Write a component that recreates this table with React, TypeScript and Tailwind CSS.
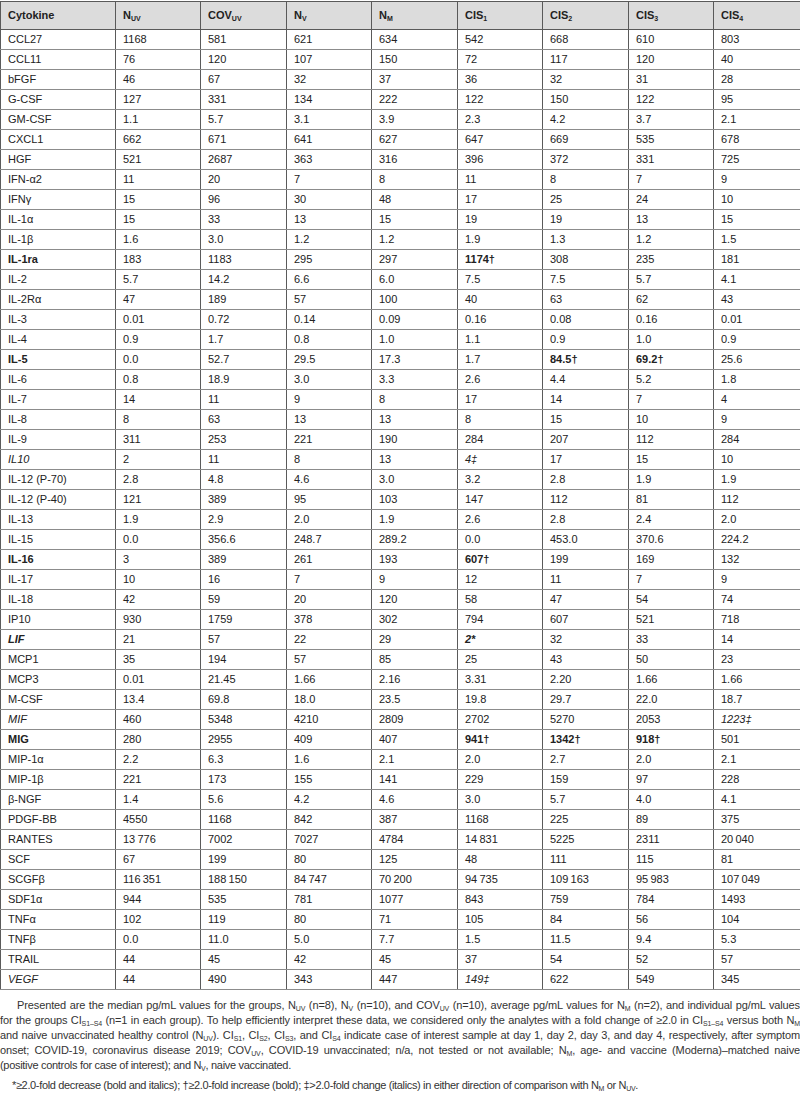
import React from "react";

// column headers: [main, subscript]
const headers: [string, string][] = [
  ["N", "UV"],
  ["COV", "UV"],
  ["N", "V"],
  ["N", "M"],
  ["CIS", "1"],
  ["CIS", "2"],
  ["CIS", "3"],
  ["CIS", "4"],
];

const T = "\u2009";

// prefix "b:" bold, "i:" italic, "bi:" bold italic
const rows: string[][] = [
  ["CCL27", "1168", "581", "621", "634", "542", "668", "610", "803"],
  ["CCL11", "76", "120", "107", "150", "72", "117", "120", "40"],
  ["bFGF", "46", "67", "32", "37", "36", "32", "31", "28"],
  ["G-CSF", "127", "331", "134", "222", "122", "150", "122", "95"],
  ["GM-CSF", "1.1", "5.7", "3.1", "3.9", "2.3", "4.2", "3.7", "2.1"],
  ["CXCL1", "662", "671", "641", "627", "647", "669", "535", "678"],
  ["HGF", "521", "2687", "363", "316", "396", "372", "331", "725"],
  ["IFN-α2", "11", "20", "7", "8", "11", "8", "7", "9"],
  ["IFNγ", "15", "96", "30", "48", "17", "25", "24", "10"],
  ["IL-1α", "15", "33", "13", "15", "19", "19", "13", "15"],
  ["IL-1β", "1.6", "3.0", "1.2", "1.2", "1.9", "1.3", "1.2", "1.5"],
  ["b:IL-1ra", "183", "1183", "295", "297", "b:1174†", "308", "235", "181"],
  ["IL-2", "5.7", "14.2", "6.6", "6.0", "7.5", "7.5", "5.7", "4.1"],
  ["IL-2Rα", "47", "189", "57", "100", "40", "63", "62", "43"],
  ["IL-3", "0.01", "0.72", "0.14", "0.09", "0.16", "0.08", "0.16", "0.01"],
  ["IL-4", "0.9", "1.7", "0.8", "1.0", "1.1", "0.9", "1.0", "0.9"],
  ["b:IL-5", "0.0", "52.7", "29.5", "17.3", "1.7", "b:84.5†", "b:69.2†", "25.6"],
  ["IL-6", "0.8", "18.9", "3.0", "3.3", "2.6", "4.4", "5.2", "1.8"],
  ["IL-7", "14", "11", "9", "8", "17", "14", "7", "4"],
  ["IL-8", "8", "63", "13", "13", "8", "15", "10", "9"],
  ["IL-9", "311", "253", "221", "190", "284", "207", "112", "284"],
  ["i:IL10", "2", "11", "8", "13", "i:4‡", "17", "15", "10"],
  ["IL-12 (P-70)", "2.8", "4.8", "4.6", "3.0", "3.2", "2.8", "1.9", "1.9"],
  ["IL-12 (P-40)", "121", "389", "95", "103", "147", "112", "81", "112"],
  ["IL-13", "1.9", "2.9", "2.0", "1.9", "2.6", "2.8", "2.4", "2.0"],
  ["IL-15", "0.0", "356.6", "248.7", "289.2", "0.0", "453.0", "370.6", "224.2"],
  ["b:IL-16", "3", "389", "261", "193", "b:607†", "199", "169", "132"],
  ["IL-17", "10", "16", "7", "9", "12", "11", "7", "9"],
  ["IL-18", "42", "59", "20", "120", "58", "47", "54", "74"],
  ["IP10", "930", "1759", "378", "302", "794", "607", "521", "718"],
  ["bi:LIF", "21", "57", "22", "29", "bi:2*", "32", "33", "14"],
  ["MCP1", "35", "194", "57", "85", "25", "43", "50", "23"],
  ["MCP3", "0.01", "21.45", "1.66", "2.16", "3.31", "2.20", "1.66", "1.66"],
  ["M-CSF", "13.4", "69.8", "18.0", "23.5", "19.8", "29.7", "22.0", "18.7"],
  ["i:MIF", "460", "5348", "4210", "2809", "2702", "5270", "2053", "i:1223‡"],
  ["b:MIG", "280", "2955", "409", "407", "b:941†", "b:1342†", "b:918†", "501"],
  ["MIP-1α", "2.2", "6.3", "1.6", "2.1", "2.0", "2.7", "2.0", "2.1"],
  ["MIP-1β", "221", "173", "155", "141", "229", "159", "97", "228"],
  ["β-NGF", "1.4", "5.6", "4.2", "4.6", "3.0", "5.7", "4.0", "4.1"],
  ["PDGF-BB", "4550", "1168", "842", "387", "1168", "225", "89", "375"],
  ["RANTES", `13${T}776`, "7002", "7027", "4784", `14${T}831`, "5225", "2311", `20${T}040`],
  ["SCF", "67", "199", "80", "125", "48", "111", "115", "81"],
  ["SCGFβ", `116${T}351`, `188${T}150`, `84${T}747`, `70${T}200`, `94${T}735`, `109${T}163`, `95${T}983`, `107${T}049`],
  ["SDF1α", "944", "535", "781", "1077", "843", "759", "784", "1493"],
  ["TNFα", "102", "119", "80", "71", "105", "84", "56", "104"],
  ["TNFβ", "0.0", "11.0", "5.0", "7.7", "1.5", "11.5", "9.4", "5.3"],
  ["TRAIL", "44", "45", "42", "45", "37", "54", "52", "57"],
  ["i:VEGF", "44", "490", "343", "447", "i:149‡", "622", "549", "345"],
];

const Cell = ({ v }: { v: string }) => {
  if (v.startsWith("bi:")) return <span className="font-bold italic">{v.slice(3)}</span>;
  if (v.startsWith("b:")) return <span className="font-bold">{v.slice(2)}</span>;
  if (v.startsWith("i:")) return <span className="italic">{v.slice(2)}</span>;
  return <>{v}</>;
};

const Sub = ({ children }: { children: React.ReactNode }) => (
  <sub className="text-[7px] leading-none">{children}</sub>
);

// one justified line of the footnote
const Line = ({ children, first }: { children: React.ReactNode; first?: boolean }) => (
  <div className={`whitespace-nowrap text-justify [text-align-last:justify] ${first ? "pl-[17px]" : ""}`}>{children}</div>
);

const App = () => {
  return (
    <div className="w-[800px] bg-white pt-px text-[#222]" style={{ fontFamily: '"Liberation Sans", Arial, sans-serif' }}>
      <table className="w-[800px] table-fixed border-collapse text-[11px]">
        <colgroup>
          <col className="w-[115px]" />
          <col className="w-[85px]" />
          <col className="w-[86px]" />
          <col className="w-[85px]" />
          <col className="w-[86px]" />
          <col className="w-[85px]" />
          <col className="w-[86px]" />
          <col className="w-[85px]" />
          <col className="w-[87px]" />
        </colgroup>
        <thead>
          <tr className="h-[28px] bg-[#dcdcdc]">
            <th className="border border-[#5a5a5a] px-[7px] text-left font-bold">Cytokine</th>
            {headers.map(([m, s], i) => (
              <th key={i} className="border border-[#5a5a5a] px-[7px] text-left font-bold">
                {m}
                <Sub>{s}</Sub>
              </th>
            ))}
          </tr>
        </thead>
        <tbody>
          {rows.map((r, ri) => (
            <tr key={ri} className="h-[20px]">
              {r.map((v, ci) => (
                <td
                  key={ci}
                  className="border-x border-x-[#5a5a5a] border-y border-y-[#8c8c8c] px-[7px] py-0 leading-none whitespace-nowrap"
                >
                  <Cell v={v} />
                </td>
              ))}
            </tr>
          ))}
        </tbody>
      </table>

      <div className="mt-[8px] text-[11px] leading-[15px] tracking-[-0.12px] text-[#333]">
        <Line first>
          Presented are the median pg/mL values for the groups, N<Sub>UV</Sub> (n=8), N<Sub>V</Sub> (n=10), and COV
          <Sub>UV</Sub> (n=10), average pg/mL values for N<Sub>M</Sub> (n=2), and individual pg/mL values
        </Line>
        <Line>
          for the groups CI<Sub>S1–S4</Sub> (n=1 in each group). To help efficiently interpret these data, we considered
          only the analytes with a fold change of ≥2.0 in CI<Sub>S1–S4</Sub> versus both N<Sub>M</Sub>
        </Line>
        <Line>
          and naive unvaccinated healthy control (N<Sub>UV</Sub>). CI<Sub>S1</Sub>, CI<Sub>S2</Sub>, CI<Sub>S3</Sub>, and
          CI<Sub>S4</Sub> indicate case of interest sample at day 1, day 2, day 3, and day 4, respectively, after symptom
        </Line>
        <Line>
          onset; COVID-19, coronavirus disease 2019; COV<Sub>UV</Sub>, COVID-19 unvaccinated; n/a, not tested or not
          available; N<Sub>M</Sub>, age- and vaccine (Moderna)–matched naive
        </Line>
        <div className="tracking-[-0.3px]">
          (positive controls for case of interest); and N<Sub>V</Sub>, naive vaccinated.
        </div>
        <p className="mt-[5px] pl-[12px] tracking-[-0.35px]">
          *≥2.0-fold decrease (bold and italics); †≥2.0-fold increase (bold); ‡&gt;2.0-fold change (italics) in either
          direction of comparison with N<Sub>M</Sub> or N<Sub>UV</Sub>.
        </p>
      </div>
    </div>
  );
};

export default App;
